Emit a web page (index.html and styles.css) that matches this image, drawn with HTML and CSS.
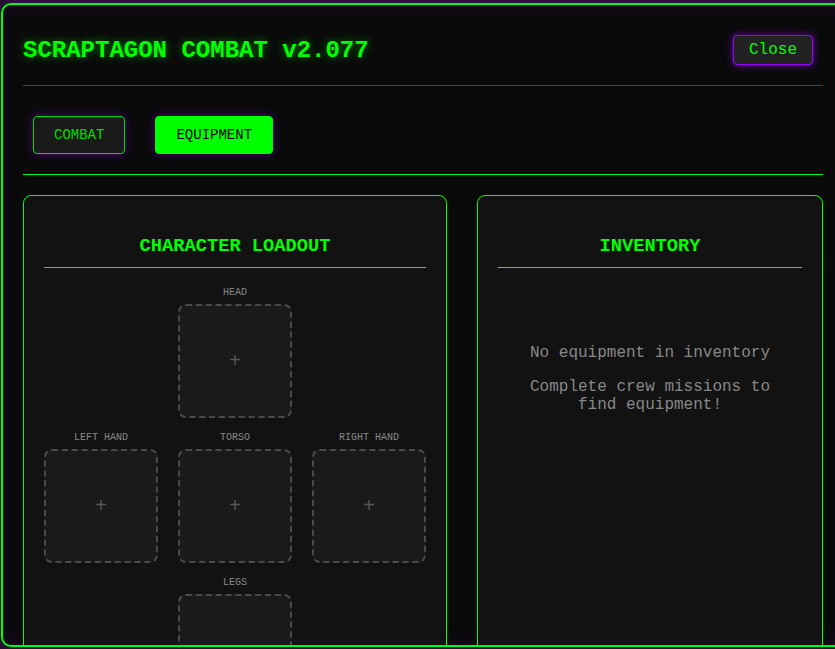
FILE: index.html
```html
<!DOCTYPE html>
<html lang="en">
<head>
<meta charset="utf-8">
<title>Scraptagon Combat</title>
<link rel="stylesheet" href="styles.css">
</head>
<body>
<div class="modal">
  <div class="header">
    <h2 class="title">SCRAPTAGON COMBAT v2.077</h2>
    <button class="close-btn">Close</button>
  </div>
  <div class="tabs">
    <button class="tab">COMBAT</button>
    <button class="tab active">EQUIPMENT</button>
  </div>
  <div class="panels">
    <div class="panel loadout">
      <h3 class="panel-title">CHARACTER LOADOUT</h3>
      <div class="slots">
        <div class="slot-cell head"><div class="slot-label">HEAD</div><div class="slot">+</div></div>
        <div class="slot-cell left-hand"><div class="slot-label">LEFT HAND</div><div class="slot">+</div></div>
        <div class="slot-cell torso"><div class="slot-label">TORSO</div><div class="slot">+</div></div>
        <div class="slot-cell right-hand"><div class="slot-label">RIGHT HAND</div><div class="slot">+</div></div>
        <div class="slot-cell legs"><div class="slot-label">LEGS</div><div class="slot">+</div></div>
      </div>
    </div>
    <div class="panel inventory">
      <h3 class="panel-title">INVENTORY</h3>
      <div class="empty">
        <p>No equipment in inventory</p>
        <p>Complete crew missions to find equipment!</p>
      </div>
    </div>
  </div>
</div>
</body>
</html>
```

FILE: styles.css
```css
html, body {
  margin: 0;
  padding: 0;
  background: #1c1020;
  overflow: hidden;
  height: 649px;
}
body {
  font-family: "Courier New", Courier, "Nimbus Mono PS", "Nimbus Mono L", FreeMono, "Liberation Mono", monospace;
}
.modal {
  box-sizing: border-box;
  margin: 3px 0 0 1px;
  width: 844px;
  height: 644px;
  overflow: hidden;
  background: #0a0a0a;
  border: 2px solid #00ff00;
  border-radius: 10px;
  padding: 20px;
  box-shadow: 0 0 20px rgba(153, 0, 255, 0.4), inset 0 0 18px rgba(153, 0, 255, 0.12);
}
.header {
  display: flex;
  justify-content: space-between;
  align-items: center;
  padding: 10px 0 20px 0;
  border-bottom: 1px solid #9100c4;
  margin-bottom: 20px;
}
.title {
  margin: 0;
  font-size: 24px;
  font-weight: bold;
  color: #00ff00;
  text-shadow: 0 0 8px rgba(0, 255, 0, 0.5);
}
.close-btn {
  font-family: inherit;
  font-size: 16px;
  line-height: 18px;
  color: #00ff00;
  background: #222;
  border: 1px solid #9d00ff;
  border-radius: 4px;
  padding: 5px 15px;
  margin-right: 10px;
  box-shadow: 0 0 8px rgba(157, 0, 255, 0.6);
}
.tabs {
  display: flex;
  gap: 30px;
  padding: 10px 10px 20px 10px;
  border-bottom: 1px solid #00ff00;
  margin-bottom: 20px;
}
.tab {
  font-family: inherit;
  font-size: 14px;
  line-height: 16px;
  padding: 10px 20px;
  color: #00dd00;
  background: #1a1a1a;
  border: 1px solid #00dd00;
  border-radius: 4px;
  box-shadow: 0 0 10px rgba(157, 0, 255, 0.45);
}
.tab.active {
  background: #00ff00;
  border-color: #00ff00;
  color: #000;
}
.panels {
  display: flex;
  gap: 30px;
  align-items: flex-start;
}
.panel {
  background: #121212;
  border: 1px solid #00ff00;
  border-radius: 8px;
  padding: 20px;
  min-height: 600px;
}
.loadout {
  flex: none;
}
.inventory {
  flex: 1;
}
.panel-title {
  margin: 18.72px 0;
  font-size: 18.72px;
  font-weight: bold;
  color: #00ff00;
  text-align: center;
  padding-bottom: 10px;
  border-bottom: 1px solid #00ff00;
}
.slots {
  display: grid;
  grid-template-columns: repeat(3, 114px);
  column-gap: 20px;
  row-gap: 13px;
}
.slot-cell {
  display: flex;
  flex-direction: column;
  align-items: center;
}
.head { grid-column: 2; grid-row: 1; }
.left-hand { grid-column: 1; grid-row: 2; }
.torso { grid-column: 2; grid-row: 2; }
.right-hand { grid-column: 3; grid-row: 2; }
.legs { grid-column: 2; grid-row: 3; }
.slot-label {
  font-size: 10px;
  line-height: 13px;
  color: #8a8a8a;
  margin-bottom: 5px;
}
.slot {
  box-sizing: border-box;
  width: 114px;
  height: 114px;
  border: 2px dashed #4a4a4a;
  border-radius: 8px;
  background: #1a1a1a;
  display: flex;
  align-items: center;
  justify-content: center;
  color: #555;
  font-size: 20px;
}
.empty {
  padding: 42px 20px 40px;
  text-align: center;
  color: #888;
  font-size: 16px;
  line-height: 18px;
}
.empty p {
  margin: 16px 0;
}
```
